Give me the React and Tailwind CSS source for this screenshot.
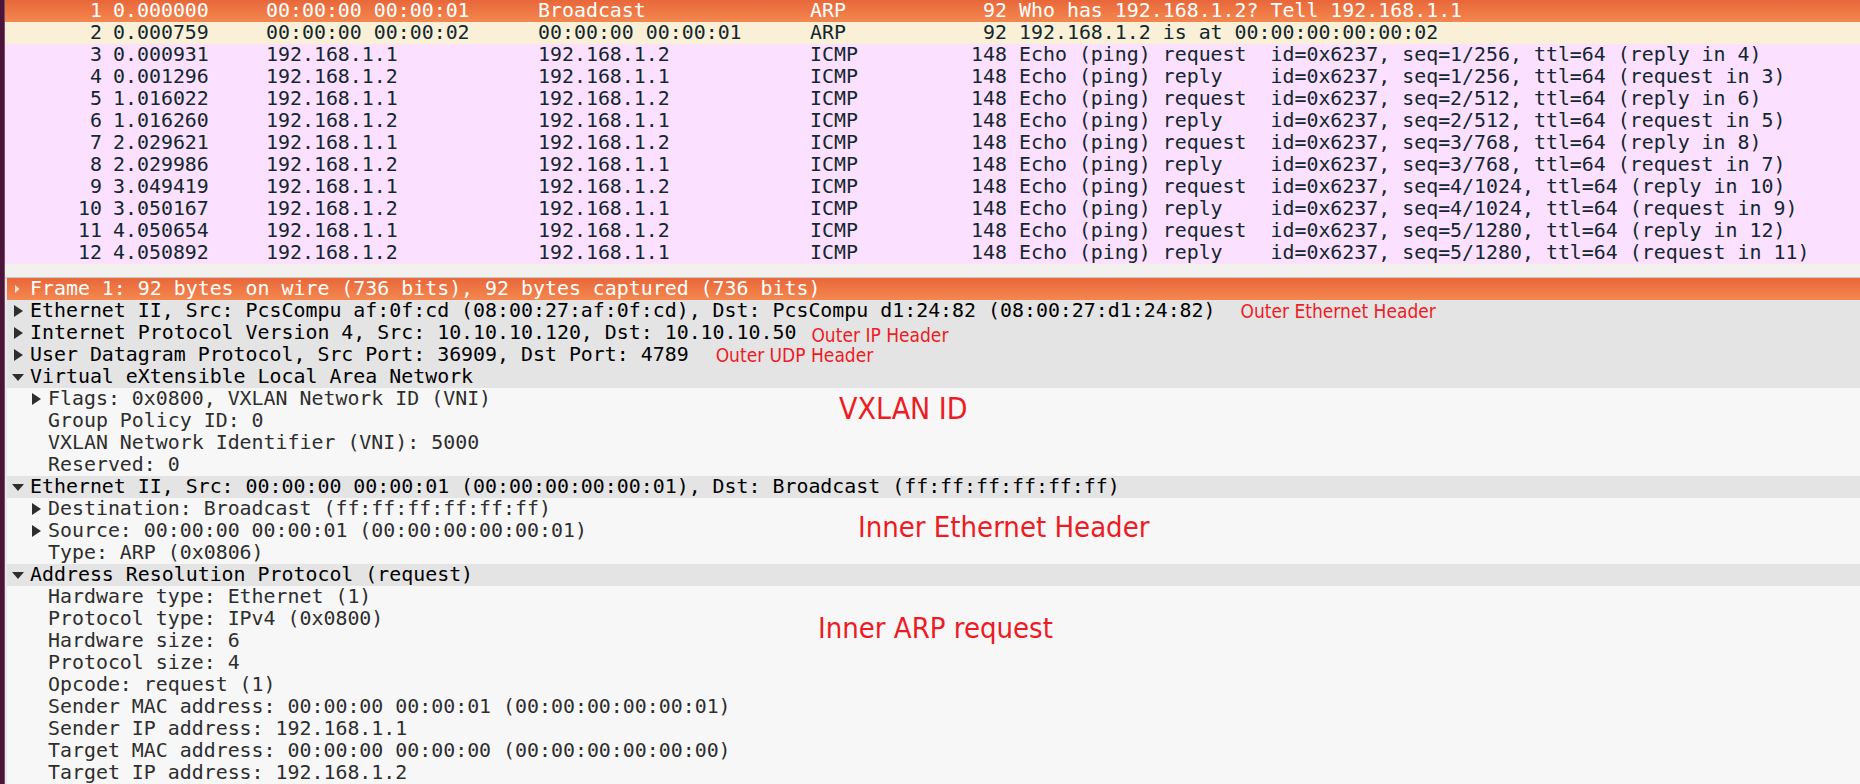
const packets = [
  { no: 1, time: '0.000000', src: '00:00:00 00:00:01', dst: 'Broadcast', proto: 'ARP', len: 92, info: 'Who has 192.168.1.2? Tell 192.168.1.1' },
  { no: 2, time: '0.000759', src: '00:00:00 00:00:02', dst: '00:00:00 00:00:01', proto: 'ARP', len: 92, info: '192.168.1.2 is at 00:00:00:00:00:02' },
  { no: 3, time: '0.000931', src: '192.168.1.1', dst: '192.168.1.2', proto: 'ICMP', len: 148, info: 'Echo (ping) request  id=0x6237, seq=1/256, ttl=64 (reply in 4)' },
  { no: 4, time: '0.001296', src: '192.168.1.2', dst: '192.168.1.1', proto: 'ICMP', len: 148, info: 'Echo (ping) reply    id=0x6237, seq=1/256, ttl=64 (request in 3)' },
  { no: 5, time: '1.016022', src: '192.168.1.1', dst: '192.168.1.2', proto: 'ICMP', len: 148, info: 'Echo (ping) request  id=0x6237, seq=2/512, ttl=64 (reply in 6)' },
  { no: 6, time: '1.016260', src: '192.168.1.2', dst: '192.168.1.1', proto: 'ICMP', len: 148, info: 'Echo (ping) reply    id=0x6237, seq=2/512, ttl=64 (request in 5)' },
  { no: 7, time: '2.029621', src: '192.168.1.1', dst: '192.168.1.2', proto: 'ICMP', len: 148, info: 'Echo (ping) request  id=0x6237, seq=3/768, ttl=64 (reply in 8)' },
  { no: 8, time: '2.029986', src: '192.168.1.2', dst: '192.168.1.1', proto: 'ICMP', len: 148, info: 'Echo (ping) reply    id=0x6237, seq=3/768, ttl=64 (request in 7)' },
  { no: 9, time: '3.049419', src: '192.168.1.1', dst: '192.168.1.2', proto: 'ICMP', len: 148, info: 'Echo (ping) request  id=0x6237, seq=4/1024, ttl=64 (reply in 10)' },
  { no: 10, time: '3.050167', src: '192.168.1.2', dst: '192.168.1.1', proto: 'ICMP', len: 148, info: 'Echo (ping) reply    id=0x6237, seq=4/1024, ttl=64 (request in 9)' },
  { no: 11, time: '4.050654', src: '192.168.1.1', dst: '192.168.1.2', proto: 'ICMP', len: 148, info: 'Echo (ping) request  id=0x6237, seq=5/1280, ttl=64 (reply in 12)' },
  { no: 12, time: '4.050892', src: '192.168.1.2', dst: '192.168.1.1', proto: 'ICMP', len: 148, info: 'Echo (ping) reply    id=0x6237, seq=5/1280, ttl=64 (request in 11)' },
];

// level, arrow: 'closed' | 'open' | 'sel' | null
const tree = [
  { level: 0, arrow: 'sel', text: 'Frame 1: 92 bytes on wire (736 bits), 92 bytes captured (736 bits)', selected: true },
  { level: 0, arrow: 'closed', text: 'Ethernet II, Src: PcsCompu af:0f:cd (08:00:27:af:0f:cd), Dst: PcsCompu d1:24:82 (08:00:27:d1:24:82)', note: 'Outer Ethernet Header', noteClass: 'ml-[25px] text-[19px]' },
  { level: 0, arrow: 'closed', text: 'Internet Protocol Version 4, Src: 10.10.10.120, Dst: 10.10.10.50', note: 'Outer IP Header', noteClass: 'ml-[15px] text-[19px] relative top-[2px]' },
  { level: 0, arrow: 'closed', text: 'User Datagram Protocol, Src Port: 36909, Dst Port: 4789', note: 'Outer UDP Header', noteClass: 'ml-[27px] text-[19px]' },
  { level: 0, arrow: 'open', text: 'Virtual eXtensible Local Area Network' },
  { level: 1, arrow: 'closed', text: 'Flags: 0x0800, VXLAN Network ID (VNI)' },
  { level: 1, text: 'Group Policy ID: 0' },
  { level: 1, text: 'VXLAN Network Identifier (VNI): 5000' },
  { level: 1, text: 'Reserved: 0' },
  { level: 0, arrow: 'open', text: 'Ethernet II, Src: 00:00:00 00:00:01 (00:00:00:00:00:01), Dst: Broadcast (ff:ff:ff:ff:ff:ff)' },
  { level: 1, arrow: 'closed', text: 'Destination: Broadcast (ff:ff:ff:ff:ff:ff)' },
  { level: 1, arrow: 'closed', text: 'Source: 00:00:00 00:00:01 (00:00:00:00:00:01)' },
  { level: 1, text: 'Type: ARP (0x0806)' },
  { level: 0, arrow: 'open', text: 'Address Resolution Protocol (request)' },
  { level: 1, text: 'Hardware type: Ethernet (1)' },
  { level: 1, text: 'Protocol type: IPv4 (0x0800)' },
  { level: 1, text: 'Hardware size: 6' },
  { level: 1, text: 'Protocol size: 4' },
  { level: 1, text: 'Opcode: request (1)' },
  { level: 1, text: 'Sender MAC address: 00:00:00 00:00:01 (00:00:00:00:00:01)' },
  { level: 1, text: 'Sender IP address: 192.168.1.1' },
  { level: 1, text: 'Target MAC address: 00:00:00 00:00:00 (00:00:00:00:00:00)' },
  { level: 1, text: 'Target IP address: 192.168.1.2' },
];

const noteFont = "font-['Liberation_Sans_Narrow','DejaVu_Sans_Condensed','Roboto_Condensed',Roboto,sans-serif] text-[#ed1c24]";

function Arrow({ kind }) {
  return (
    <svg width="23" height="22" viewBox="0 0 23 22" className="shrink-0">
      {kind === 'closed' && <polygon points="7,5 16,11 7,17" fill="#2e2e2e" />}
      {kind === 'open' && <polygon points="5,8 17,8 11,15" fill="#2e2e2e" />}
      {kind === 'sel' && <polygon points="8,7 12.5,11 8,15" fill="#fde2d4" />}
    </svg>
  );
}

function PacketRow({ p }) {
  const selected = p.no === 1;
  const color = selected
    ? 'bg-linear-to-b from-[#e8673a] to-[#f4874f] text-white'
    : p.proto === 'ARP'
      ? 'bg-[#faf0d7] text-[#12272e]'
      : 'bg-[#fce0ff] text-[#12272e]';
  return (
    <div className={`flex h-[22px] items-center whitespace-pre ${color}`}>
      <div className="w-[97px] text-right">{p.no}</div>
      <div className="w-[164px] pl-[11px]">{p.time}</div>
      <div className="w-[272px]">{p.src}</div>
      <div className="w-[272px]">{p.dst}</div>
      <div className="w-[137px]">{p.proto}</div>
      <div className="w-[60px] text-right">{p.len}</div>
      <div className="pl-[12px]">{p.info}</div>
    </div>
  );
}

function TreeRow({ row }) {
  const color = row.selected
    ? 'bg-linear-to-b from-[#e8673a] to-[#f4874f] text-white'
    : row.level === 0
      ? 'bg-[#e4e4e4] text-black'
      : 'text-[#2e2e2e]';
  return (
    <div className={`flex h-[22px] items-center whitespace-pre ${color}`}>
      {row.level > 0 && <div className="w-[18px] shrink-0" />}
      <Arrow kind={row.arrow} />
      <span>{row.text}</span>
      {row.note && <span className={`${noteFont} leading-none ${row.noteClass}`}>{row.note}</span>}
    </div>
  );
}

export default function App() {
  return (
    <div className="flex h-[784px] w-[1860px] overflow-hidden bg-[#f7f7f7] font-['DejaVu_Sans_Mono',monospace] text-[19.9px] leading-[22px]">
      {/* desktop edge */}
      <div className="w-[5px] shrink-0 border-r border-[#7d4a6e] bg-[#4a1539]" />

      <div className="relative flex min-w-0 flex-1 flex-col">
        {/* packet list */}
        <div className="bg-[#f2f1ef]">
          {packets.map((p) => (
            <PacketRow key={p.no} p={p} />
          ))}
          <div className="h-[13px] border-t border-[#f7f1df]" />
        </div>
        <div className="h-[2px] bg-[#cbc9c6]" />

        {/* packet details */}
        <div className="flex-1 border-l-2 border-[#e9e9e9] bg-[#f7f7f7]">
          {tree.map((row, i) => (
            <TreeRow key={i} row={row} />
          ))}
        </div>

        {/* annotations */}
        <div className={`${noteFont} absolute left-[834px] top-[394px] text-[30px] leading-none`}>VXLAN ID</div>
        <div className={`${noteFont} absolute left-[853px] top-[513px] text-[29px] leading-none`}>Inner Ethernet Header</div>
        <div className={`${noteFont} absolute left-[813px] top-[614px] text-[29px] leading-none`}>Inner ARP request</div>
      </div>
    </div>
  );
}
